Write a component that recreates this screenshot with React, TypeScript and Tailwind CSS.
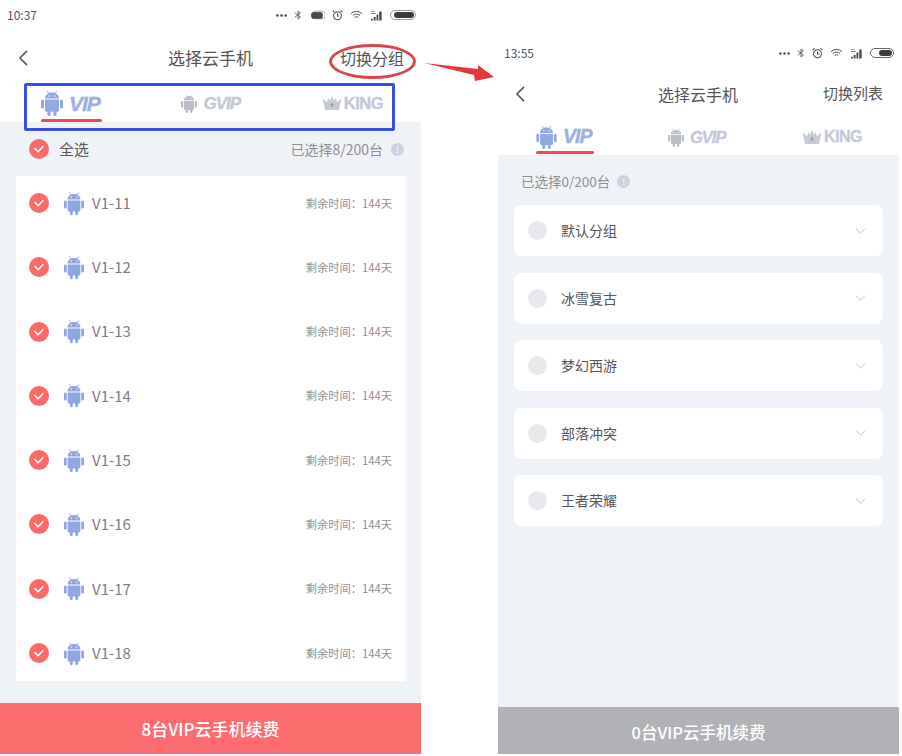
const machines = ['V1-11', 'V1-12', 'V1-13', 'V1-14', 'V1-15', 'V1-16', 'V1-17', 'V1-18']
const groups = ['默认分组', '冰雪复古', '梦幻西游', '部落冲突', '王者荣耀']

function Android({ className }: { className: string }) {
  return (
    <svg viewBox="0 0 22 26" className={className} fill="currentColor">
      <path d="M6.2 1 8 3.6M15.8 1 14 3.6" stroke="currentColor" strokeWidth="1" fill="none" />
      <path d="M4 8.6C4 5 7 2.6 11 2.6S18 5 18 8.6Z" />
      <path d="M4 9.6h14v10.6a1.6 1.6 0 0 1-1.6 1.6H5.6A1.6 1.6 0 0 1 4 20.2Z" />
      <rect x="0" y="9.6" width="3" height="9" rx="1.5" />
      <rect x="19" y="9.6" width="3" height="9" rx="1.5" />
      <rect x="6.4" y="20" width="3.2" height="6" rx="1.6" />
      <rect x="12.4" y="20" width="3.2" height="6" rx="1.6" />
      <circle cx="8" cy="6" r="0.7" fill="#fff" />
      <circle cx="14" cy="6" r="0.7" fill="#fff" />
    </svg>
  )
}

function Crown({ className }: { className: string }) {
  return (
    <svg viewBox="0 0 24 18" className={className} fill="currentColor">
      <path d="M0 3 5.5 8.5 7.5 2.5 9.5 6 12 0 14.5 6 16.5 2.5 18.5 8.5 24 3 21 18H3Z" />
      <path d="M12 8.5 14 11.5 12 14.5 10 11.5Z" fill="#97a0ae" />
    </svg>
  )
}

function Check() {
  return (
    <span className="flex h-[20px] w-[20px] shrink-0 items-center justify-center rounded-full bg-[#f96a68]">
      <svg viewBox="0 0 12 12" className="h-[12px] w-[12px]" fill="none" stroke="#fff" strokeWidth="1.5" strokeLinecap="round" strokeLinejoin="round">
        <path d="M2 5.6 5.2 8.8 10 3.6" />
      </svg>
    </span>
  )
}

function Info() {
  return (
    <span className="flex h-[13px] w-[13px] items-center justify-center rounded-full bg-[#ccd3e0] text-[9px] leading-none text-white">!</span>
  )
}

function StatusIcons({ small }: { small?: boolean }) {
  return (
    <div className="flex items-center gap-[7px] text-[#4a4a4a]">
      <svg viewBox="0 0 12 3" className="h-[3px] w-[11px]" fill="currentColor">
        <circle cx="1.5" cy="1.5" r="1.4" />
        <circle cx="6" cy="1.5" r="1.4" />
        <circle cx="10.5" cy="1.5" r="1.4" />
      </svg>
      <svg viewBox="0 0 10 12" className="h-[12px] w-[8px]" fill="none" stroke="currentColor" strokeWidth="1">
        <path d="M1 3.2 8 8.6 5 11V1l3 2.4L1 8.8" />
      </svg>
      {!small && (
        <svg viewBox="0 0 18 12" className="h-[11px] w-[16px]" fill="none" stroke="currentColor">
          <rect x="3" y="2.5" width="12" height="7" rx="2" fill="currentColor" />
          <path d="M5 1h9a3.5 3.5 0 0 1 0 9" strokeWidth="0.8" opacity="0.6" />
        </svg>
      )}
      <svg viewBox="0 0 12 12" className="h-[12px] w-[11px]" fill="none" stroke="currentColor" strokeWidth="1.1">
        <circle cx="6" cy="6.8" r="4.3" />
        <path d="M6 4.4v2.6h2M0.8 2.8 2.8 1M11.2 2.8 9.2 1" />
      </svg>
      <svg viewBox="0 0 14 11" className="h-[10px] w-[13px]" fill="none" stroke="currentColor" strokeWidth="1.1">
        <path d="M1 4a8.5 8.5 0 0 1 12 0M3 6.2a5.6 5.6 0 0 1 8 0M5 8.2a2.8 2.8 0 0 1 4 0" />
      </svg>
      <svg viewBox="0 0 14 12" className="h-[11px] w-[13px]" fill="currentColor">
        <path d="M1 11.5h2v-2H1ZM4 11.5h2v-4H4ZM7 11.5h2v-6.5H7ZM10 11.5h2.6V1.5H10Z" />
        <path d="M1 1h4v1H1ZM1 3.4h5v1H1Z" opacity="0.7" />
      </svg>
      <span className={small ? 'flex h-[10px] w-[24px] items-center justify-end rounded-[5px] border border-[#6a6a6a] p-[1px]' : 'flex h-[10px] w-[26px] items-center justify-end rounded-[5px] border border-[#9a9a9a] p-[1px]'}>
        <span className={small ? 'h-full w-[13px] rounded-[3px] bg-[#3c3c3c]' : 'h-full w-[20px] rounded-[3px] bg-[#3c3c3c]'} />
      </span>
    </div>
  )
}

function Back() {
  return (
    <svg viewBox="0 0 11 18" className="h-[16px] w-[10px]" fill="none" stroke="#555" strokeWidth="1.8" strokeLinecap="round" strokeLinejoin="round">
      <path d="M9.5 1.5 2 9l7.5 7.5" />
    </svg>
  )
}

interface TabsProps {
  iconClass: string
  vipClass: string
  gvipClass: string
  kingClass: string
  barClass: string
}

function Tabs({ iconClass, vipClass, gvipClass, kingClass, barClass }: TabsProps) {
  return (
    <div className="flex items-center justify-between font-['Liberation_Sans',sans-serif] font-bold [-webkit-text-stroke:0.4px_currentColor]">
      <div className="relative flex items-center gap-[6px] text-[#93a9e2]">
        <Android className={iconClass} />
        <span className={`italic tracking-[-1px] text-[#9db0df] ${vipClass}`}>VIP</span>
        <span className={`absolute left-0 h-[3px] rounded-full bg-[#ea4a50] ${barClass}`} />
      </div>
      <div className="flex items-center gap-[6px] text-[#b9bdc4]">
        <Android className="h-[19px] w-[16px]" />
        <span className={`italic tracking-[-1px] text-[#c3c9d6] ${gvipClass}`}>GVIP</span>
      </div>
      <div className="flex items-center gap-[2px] text-[#c5cad3]">
        <Crown className="h-[14px] w-[20px]" />
        <span className={`tracking-[-0.5px] text-[#c3c9d6] ${kingClass}`}>KING</span>
      </div>
    </div>
  )
}

function ListPhone() {
  return (
    <div className="relative flex h-[754px] w-[421px] shrink-0 flex-col bg-white">
      <div className="flex h-[30px] items-center justify-between pl-[7px] pr-[5px]">
        <span className="text-[12px] text-[#555]">10:37</span>
        <StatusIcons />
      </div>
      <div className="relative flex h-[55px] items-center justify-between pl-[18px] pr-[17px]">
        <Back />
        <span className="absolute left-[168px] text-[17px] text-[#555]">选择云手机</span>
        <span className="text-[16px] text-[#555]">切换分组</span>
      </div>
      <div className="h-[37px] pl-[41px] pr-[38px] pt-[5px]">
        <Tabs
          iconClass="h-[26px] w-[22px]"
          vipClass="text-[21px] leading-none"
          gvipClass="text-[17px] leading-none"
          kingClass="text-[16.5px] leading-none"
          barClass="-bottom-[6px] w-[61px]"
        />
      </div>
      <div className="flex min-h-0 flex-1 flex-col bg-[#eff3f8]">
        <div className="flex h-[54px] items-center justify-between pl-[29px] pr-[17px]">
          <div className="flex items-center gap-[10px]">
            <Check />
            <span className="text-[15px] text-[#555]">全选</span>
          </div>
          <div className="flex items-center gap-[8px]">
            <span className="text-[14px] text-[#8f8f8f]">已选择8/200台</span>
            <Info />
          </div>
        </div>
        <div className="mx-[16px] flex h-[505px] flex-col gap-[10.3px] bg-white px-[13px]">
          {machines.map((m) => (
            <div key={m} className="flex h-[54px] shrink-0 items-center justify-between">
              <div className="flex items-center">
                <Check />
                <Android className="ml-[15px] h-[25px] w-[20px] text-[#8fa6e2]" />
                <span className="ml-[8px] text-[15px] text-[#7c7c7c]">{m}</span>
              </div>
              <span className="text-[11.25px] text-[#8f8f8f]">剩余时间：144天</span>
            </div>
          ))}
        </div>
      </div>
      <div className="flex h-[51px] items-center justify-center text-[17px] font-medium text-white bg-[#fd6d6f]">8台VIP云手机续费</div>
      <div className="absolute left-[24px] top-[83px] h-[48px] w-[371px] rounded-[2px] border-[3px] border-[#3a4fe0]" />
      <div className="absolute left-[329px] top-[44px] h-[35px] w-[87px] rounded-[50%] border-[3px] border-[#d9474a]" />
    </div>
  )
}

function GroupPhone() {
  return (
    <div className="flex h-[714px] w-[401px] shrink-0 flex-col bg-white">
      <div className="flex h-[26px] items-center justify-between pl-[6px] pr-[5px]">
        <span className="text-[12px] text-[#555]">13:55</span>
        <StatusIcons small />
      </div>
      <div className="relative flex h-[55px] items-center justify-between pl-[17px] pr-[16px]">
        <Back />
        <span className="absolute left-[160px] text-[16px] text-[#555]">选择云手机</span>
        <span className="text-[15px] text-[#555]">切换列表</span>
      </div>
      <div className="h-[34px] pl-[38px] pr-[37px] pt-[4px]">
        <Tabs
          iconClass="h-[24px] w-[21px]"
          vipClass="text-[19.5px] leading-none"
          gvipClass="text-[16.5px] leading-none"
          kingClass="text-[16px] leading-none"
          barClass="-bottom-[5px] w-[58px]"
        />
      </div>
      <div className="flex min-h-0 flex-1 flex-col bg-[#eff3f8] px-[16px]">
        <div className="flex h-[50px] items-center gap-[7px] pl-[7px] pt-[2px]">
          <span className="text-[13.5px] text-[#8f8f8f]">已选择0/200台</span>
          <Info />
        </div>
        <div className="flex flex-col gap-[16.5px]">
          {groups.map((g) => (
            <div key={g} className="flex h-[51px] items-center rounded-[8px] bg-white pl-[14px] pr-[17px]">
              <span className="h-[19px] w-[19px] rounded-full bg-[#e7e9ec]" />
              <span className="ml-[14px] flex-1 text-[14px] text-[#555]">{g}</span>
              <svg viewBox="0 0 12 7" className="h-[6px] w-[11px]" fill="none" stroke="#b9bdc4" strokeWidth="1.1" strokeLinecap="round" strokeLinejoin="round">
                <path d="M1 1 6 6l5-5" />
              </svg>
            </div>
          ))}
        </div>
      </div>
      <div className="flex h-[47px] items-center justify-center bg-[#b1b2b6] pt-[3px] text-[16.5px] font-medium text-white">0台VIP云手机续费</div>
    </div>
  )
}

export default function App() {
  return (
    <div className="relative flex h-[756px] w-[902px] items-start overflow-hidden bg-white font-['Noto_Sans_CJK_SC','Noto_Sans',sans-serif]">
      <ListPhone />
      <div className="ml-[77px] pt-[40px]">
        <GroupPhone />
      </div>
      <svg viewBox="0 0 76 24" className="absolute left-[424px] top-[60px] h-[24px] w-[76px]" fill="#e0393e">
        <path d="M0 3 54 9 54 5 70 17 51 21 50 15Z" />
      </svg>
    </div>
  )
}
